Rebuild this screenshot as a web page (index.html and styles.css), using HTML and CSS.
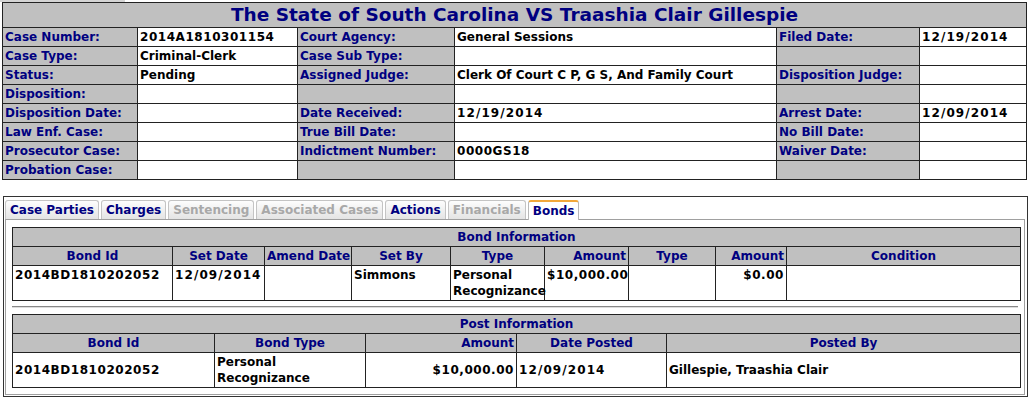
FILE: index.html
```html
<!DOCTYPE html>
<html>
<head>
<meta charset="utf-8">
<link rel="stylesheet" href="styles.css">
</head>
<body>
<div class="topstrip"></div>
<table class="case">
  <colgroup>
    <col class="c1"><col class="c2"><col class="c3"><col class="c4"><col class="c5"><col class="c6">
  </colgroup>
  <tr><th colspan="6" class="title">The State of South Carolina VS Traashia Clair Gillespie</th></tr>
  <tr><td class="lbl">Case Number:</td><td class="num">2014A1810301154</td><td class="lbl">Court Agency:</td><td>General Sessions</td><td class="lbl">Filed Date:</td><td class="d">12/19/2014</td></tr>
  <tr><td class="lbl">Case Type:</td><td>Criminal-Clerk</td><td class="lbl">Case Sub Type:</td><td></td><td class="lbl"></td><td></td></tr>
  <tr><td class="lbl">Status:</td><td>Pending</td><td class="lbl">Assigned Judge:</td><td>Clerk Of Court C P, G S, And Family Court</td><td class="lbl">Disposition Judge:</td><td></td></tr>
  <tr><td class="lbl">Disposition:</td><td></td><td class="lbl"></td><td></td><td class="lbl"></td><td></td></tr>
  <tr><td class="lbl">Disposition Date:</td><td></td><td class="lbl">Date Received:</td><td class="d">12/19/2014</td><td class="lbl">Arrest Date:</td><td class="d">12/09/2014</td></tr>
  <tr><td class="lbl">Law Enf. Case:</td><td></td><td class="lbl">True Bill Date:</td><td></td><td class="lbl">No Bill Date:</td><td></td></tr>
  <tr><td class="lbl">Prosecutor Case:</td><td></td><td class="lbl">Indictment Number:</td><td class="num">0000GS18</td><td class="lbl">Waiver Date:</td><td></td></tr>
  <tr><td class="lbl">Probation Case:</td><td></td><td class="lbl"></td><td></td><td class="lbl"></td><td></td></tr>
</table>

<div class="tabbox">
  <div class="tabs">
    <span class="tab">Case Parties</span>
    <span class="tab">Charges</span>
    <span class="tab off">Sentencing</span>
    <span class="tab off">Associated Cases</span>
    <span class="tab">Actions</span>
    <span class="tab off">Financials</span>
    <span class="tab active">Bonds</span>
  </div>
  <div class="tabbody">
    <table class="grid bond">
      <colgroup>
        <col class="b1"><col class="b2"><col class="b3"><col class="b4"><col class="b5"><col class="b6"><col class="b7"><col class="b8"><col class="b9">
      </colgroup>
      <tr><th colspan="9">Bond Information</th></tr>
      <tr><th>Bond Id</th><th>Set Date</th><th>Amend Date</th><th>Set By</th><th>Type</th><th class="r">Amount</th><th>Type</th><th class="r">Amount</th><th>Condition</th></tr>
      <tr><td class="num">2014BD1810202052</td><td class="d">12/09/2014</td><td></td><td>Simmons</td><td>Personal Recognizance</td><td class="num">$10,000.00</td><td></td><td class="r num">$0.00</td><td></td></tr>
    </table>
    <hr class="sep">
    <table class="grid post">
      <colgroup>
        <col class="p1"><col class="p2"><col class="p3"><col class="p4"><col class="p5">
      </colgroup>
      <tr><th colspan="5">Post Information</th></tr>
      <tr><th>Bond Id</th><th>Bond Type</th><th class="r">Amount</th><th>Date Posted</th><th>Posted By</th></tr>
      <tr><td class="num">2014BD1810202052</td><td>Personal<br>Recognizance</td><td class="r num">$10,000.00</td><td class="d">12/09/2014</td><td>Gillespie, Traashia Clair</td></tr>
    </table>
  </div>
</div>
</body>
</html>
```

FILE: styles.css
```css
body {
  margin: 0;
  font-family: Verdana, "DejaVu Sans", sans-serif;
  font-size: 12px;
  font-weight: bold;
  color: #000;
  background: #fff;
}

.topstrip {
  width: 125px;
  height: 2px;
  background: #d4d4d4;
}

.case {
  margin-left: 2px;
  width: 1024px;
  table-layout: fixed;
  border-collapse: collapse;
  border: 1px solid #222;
}

.case .c1 { width: 135px; }
.case .c2 { width: 160px; }
.case .c3 { width: 157px; }
.case .c4 { width: 322px; }
.case .c5 { width: 143px; }
.case .c6 { width: 107px; }

.case td, .case th {
  border: 1px solid #222;
  padding: 1px 2px;
  line-height: 16px;
  text-align: left;
  white-space: nowrap;
  overflow: hidden;
}

.case .title {
  background: #c0c0c0;
  color: #000080;
  font-size: 18.5px;
  line-height: 22px;
  text-align: center;
}

.case .lbl {
  background: #c0c0c0;
  color: #000080;
}

.num {
  letter-spacing: 0.55px;
}

.d {
  letter-spacing: 1.1px;
}

.tabbox {
  margin: 16px 0 0 3px;
  width: 1022px;
  border: 1px solid #333;
  padding: 2px 0 1px 1px;
}

.tabs {
  display: flex;
  gap: 2px;
  height: 20px;
  align-items: flex-end;
}

.tab {
  height: 19px;
  line-height: 18px;
  padding: 0 4px;
  border: 1px solid #c4c4c4;
  border-bottom: none;
  border-radius: 3px 3px 0 0;
  background: linear-gradient(#fdfdfd, #e4e4e4);
  color: #000080;
  box-sizing: border-box;
  white-space: nowrap;
}

.tab.off {
  color: #a8a8a8;
}

.tab.active {
  background: #fff;
  border-color: #b8b8b8;
  border-top: 2px solid #f2a83a;
  height: 20px;
  position: relative;
  top: 1px;
}

.tabbody {
  border: 1px solid #a0a0a0;
  padding: 7px 6px 6px 6px;
  margin-right: 2px;
}

.grid {
  width: 1008px;
  table-layout: fixed;
  border-collapse: collapse;
  border: 1px solid #222;
}

.grid th, .grid td {
  border: 1px solid #222;
  padding: 1px 2px;
  line-height: 16px;
}

.grid th {
  background: #c0c0c0;
  color: #000080;
  text-align: center;
  white-space: nowrap;
}

.grid td {
  text-align: left;
}

.grid .r {
  text-align: right;
}

.bond td {
  vertical-align: top;
}

.post td {
  vertical-align: middle;
}

.bond .b1 { width: 160px; }
.bond .b2 { width: 92px; }
.bond .b3 { width: 87px; }
.bond .b4 { width: 99px; }
.bond .b5 { width: 94px; }
.bond .b6 { width: 84px; }
.bond .b7 { width: 87px; }
.bond .b8 { width: 71px; }
.bond .b9 { width: 234px; }

.post .p1 { width: 202px; }
.post .p2 { width: 151px; }
.post .p3 { width: 151px; }
.post .p4 { width: 150px; }
.post .p5 { width: 354px; }

.sep {
  margin: 5px 0 6px 0;
  border: none;
  border-top: 1px solid #888;
  border-bottom: 1px solid #ddd;
  height: 0;
}
```
